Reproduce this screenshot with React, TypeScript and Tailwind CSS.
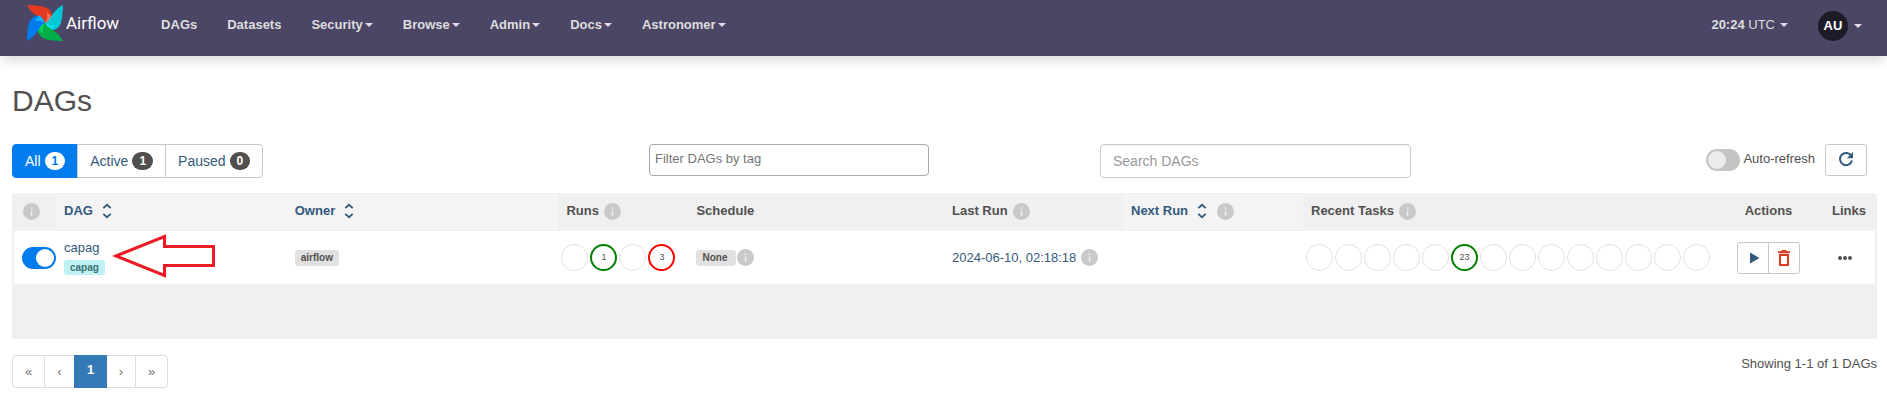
import { ReactNode } from "react";

const LINK = "text-[#33597c]";

function Caret() {
  return (
    <span
      aria-hidden="true"
      className="inline-block h-0 w-0 border-x-4 border-t-4 border-x-transparent border-t-[#e8dcea]"
    />
  );
}

function Info({ label }: { label: string }) {
  return (
    <svg role="img" aria-label={label} viewBox="0 0 20 20" className="size-[17px] shrink-0">
      <circle cx="10" cy="10" r="10" fill="#c9c9c9" />
      <rect x="9" y="5" width="2" height="2" fill="#ebebeb" />
      <rect x="9" y="9" width="2" height="6" fill="#ebebeb" />
    </svg>
  );
}

function SortIcon() {
  return (
    <svg aria-hidden="true" viewBox="0 0 10 16" className="h-4 w-[10px]" fill="none" stroke="currentColor" strokeWidth="1.8">
      <path d="M1.3 5.2 5 1.8l3.7 3.4M1.3 10.8 5 14.2l3.7-3.4" />
    </svg>
  );
}

function Logo() {
  const blades = [
    { angle: 0, main: "#e43921", fold: "#ff7557" },
    { angle: 90, main: "#00c7d4", fold: "#11e1ee" },
    { angle: 180, main: "#00ad46", fold: "#04d659" },
    { angle: 270, main: "#017cee", fold: "#0cb6ff" },
  ];
  return (
    <svg aria-hidden="true" viewBox="0 0 36 36" className="size-9">
      {blades.map((b) => (
        <g key={b.angle} transform={`rotate(${b.angle} 18 18)`}>
          <path d="M0 0C8 .4 17 .8 21 3.6 24 5.6 25.2 9 25.4 11.4L18 18C17 12.5 6 12 0 0Z" fill={b.main} />
          <path d="M18 18C20.500 14 20.800 10 19.600 7 22 9.500 24 11 25.600 11.400 25.200 14 22 16.500 18 18Z" fill={b.fold} />
        </g>
      ))}
    </svg>
  );
}

const menu = [
  { name: "DAGs", caret: false },
  { name: "Datasets", caret: false },
  { name: "Security", caret: true },
  { name: "Browse", caret: true },
  { name: "Admin", caret: true },
  { name: "Docs", caret: true },
  { name: "Astronomer", caret: true },
];

function Navbar() {
  return (
    <nav className="relative flex h-14 items-start justify-between bg-[#4b4566] pr-[25px] pl-[27px] text-[13px] leading-5 text-[#dedede] shadow-[0_6px_12px_-2px_rgba(0,0,0,0.16)]">
      <div className="flex items-start">
        <a href="#" className="mr-[27px] flex items-center gap-[3px] pt-[5px] font-['Roboto',sans-serif] text-[17px] text-white">
          <Logo />
          <span>Airflow</span>
        </a>
        {menu.map((m) =>
          m.caret ? (
            <button key={m.name} type="button" className="flex items-center gap-[2px] px-[15px] pt-[15px] font-bold">
              {m.name}
              <Caret />
            </button>
          ) : (
            <a key={m.name} href="#" className="px-[15px] pt-[15px] font-bold">
              {m.name}
            </a>
          )
        )}
      </div>
      <div className="flex items-start gap-[30px]">
        <button type="button" className="flex items-center pt-[15px]">
          <span className="mr-[5px]">
            <b>20:24</b> UTC
          </span>
          <Caret />
        </button>
        <button type="button" className="flex items-center gap-[6px] pt-[11px]">
          <span className="flex size-[30px] items-center justify-center rounded-full bg-[#1e1b29] text-[13px] font-bold text-white">
            AU
          </span>
          <Caret />
        </button>
      </div>
    </nav>
  );
}

function Toggle({ id, on, label }: { id: string; on?: boolean; label?: string }) {
  return (
    <input
      id={id}
      type="checkbox"
      role="switch"
      aria-label={label}
      defaultChecked={on}
      className="block h-[22px] w-[34px] shrink-0 appearance-none rounded-full bg-[#c4c3c2] p-[2px] before:block before:size-[18px] before:rounded-full before:bg-[#ebebeb] checked:bg-[#017cee] checked:before:ml-3 checked:before:bg-white"
    />
  );
}

function Filters() {
  const items = [
    { name: "All", count: 1, style: "rounded-l border-[#017cee] bg-[#017cee] text-white", badge: "bg-white text-[#017cee]" },
    { name: "Active", count: 1, style: "-ml-px border-[#c8c8c8] bg-white text-[#33597c]", badge: "bg-[#51504f] text-white" },
    { name: "Paused", count: 0, style: "-ml-px rounded-r border-[#c8c8c8] bg-white text-[#33597c]", badge: "bg-[#51504f] text-white" },
  ];
  return (
    <div className="flex">
      {items.map((i) => (
        <a key={i.name} href="#" className={`flex h-[34px] items-center gap-1 border px-3 text-[14px] ${i.style}`}>
          {i.name}
          <span className={`flex h-[18px] items-center rounded-full px-[7px] text-[12px] font-bold ${i.badge}`}>{i.count}</span>
        </a>
      ))}
    </div>
  );
}

function Toolbar() {
  return (
    <div className="grid grid-cols-[637fr_451fr_311fr_466fr] items-start">
      <Filters />
      <input
        aria-label="Filter DAGs by tag"
        placeholder="Filter DAGs by tag"
        className="h-8 w-[280px] rounded border border-[#aaa] px-[5px] pb-1 text-[13px] placeholder:text-[#757575]"
      />
      <input
        aria-label="Search DAGs"
        placeholder="Search DAGs"
        className="h-[34px] w-full rounded border border-[#ccc] px-3 text-[14px] shadow-[inset_0_1px_1px_rgba(0,0,0,0.075)] placeholder:text-[#999]"
      />
      <div className="flex items-start justify-end pr-[10px]">
        <div className="mt-[5px] mr-[10px] flex items-start gap-[3px]">
          <Toggle id="auto-refresh" />
          <label htmlFor="auto-refresh" className="leading-5">
            Auto-refresh
          </label>
        </div>
        <button
          type="button"
          aria-label="Refresh"
          className={`flex h-8 w-[42px] items-center justify-center rounded-[3px] border border-[#c8c8c8] ${LINK}`}
        >
          <svg viewBox="0 0 16 16" className="mb-[2px] size-4" fill="none" stroke="currentColor" strokeWidth="2">
            <path d="M13.3 4.8A6.1 6.1 0 1 0 14 9.6" />
            <path d="M15 1v6.200H8.800Z" fill="currentColor" stroke="none" />
          </svg>
        </button>
      </div>
    </div>
  );
}

type RingItem = { count?: number; color?: "green" | "red" };

function Rings({ items }: { items: RingItem[] }) {
  return (
    <div className="flex gap-[2px]">
      {items.map((r, i) => (
        <span
          key={i}
          className={`flex size-[27px] shrink-0 items-center justify-center rounded-full text-[9px] ${
            r.color === "green"
              ? "border-2 border-[#008000]"
              : r.color === "red"
                ? "border-2 border-[#ff0000]"
                : "border border-[#e1e1e1]"
          }`}
        >
          {r.count}
        </span>
      ))}
    </div>
  );
}

function Head({ children, className = "", sortable }: { children?: ReactNode; className?: string; sortable?: boolean }) {
  return (
    <th
      scope="col"
      className={`h-[38px] border-y border-[#f0f0f0] px-2 pb-[2px] text-left font-bold ${sortable ? `bg-[#f4f4f4] ${LINK}` : ""} ${className}`}
    >
      <div className="flex items-center gap-[5px]">{children}</div>
    </th>
  );
}

function SortLink({ children }: { children: ReactNode }) {
  return (
    <a href="#" className="flex items-center gap-[9px]">
      {children}
      <SortIcon />
    </a>
  );
}

const runs: RingItem[] = [{}, { count: 1, color: "green" }, {}, { count: 3, color: "red" }];
const tasks: RingItem[] = Array.from({ length: 14 }, (_, i) => (i === 5 ? { count: 23, color: "green" } : {}));

function DagTable() {
  return (
    <div className="mt-[15px] rounded-t border-x-2 border-[#f0f0f0] bg-[#f0f0f0] pb-[55px]">
      <table className="w-full table-fixed border-separate border-spacing-0">
        <thead>
          <tr>
            <Head className="w-[42px]">
              <span className="ml-px">
                <Info label="Pause or unpause DAGs" />
              </span>
            </Head>
            <Head sortable className="w-[12.4%]">
              <SortLink>DAG</SortLink>
            </Head>
            <Head sortable className="w-[14.6%]">
              <SortLink>Owner</SortLink>
            </Head>
            <Head className="w-[130px]">
              Runs <Info label="Status of all previous DAG runs" />
            </Head>
            <Head>Schedule</Head>
            <Head className="w-[179px]">
              Last Run <Info label="Date of the latest DAG run" />
            </Head>
            <Head sortable className="w-[180px]">
              <SortLink>Next Run</SortLink>
              <span className="ml-[5px]">
                <Info label="Expected date of the next DAG run" />
              </span>
            </Head>
            <Head className="w-[410px]">
              Recent Tasks <Info label="Status of tasks from active runs" />
            </Head>
            <Head className="w-[111px] [&>div]:justify-center">Actions</Head>
            <Head className="w-[51px]">Links</Head>
          </tr>
        </thead>
        <tbody>
          <tr className="h-[53px] bg-white [&>td]:px-2">
            <td>
              <Toggle id="toggle-capag" on label="Toggle capag" />
            </td>
            <td>
              <div className="relative flex flex-col items-start gap-[3px] pb-[2px]">
                <a href="#" className={`leading-[18px] ${LINK}`}>
                  capag
                </a>
                <a href="#" className="rounded-[3px] bg-[#bdf1f3] px-[6px] text-[10px] leading-[15px] font-bold text-[#3a7173]">
                  capag
                </a>
                <svg
                  aria-hidden="true"
                  viewBox="0 0 104 44"
                  className="pointer-events-none absolute -top-[5px] left-12 h-11 w-[104px]"
                  fill="none"
                  stroke="#ed1c24"
                  strokeWidth="3"
                >
                  <path d="M4 22 52.500 2.500V12.500H101.500V31.500H52.500V41.500Z" />
                </svg>
              </div>
            </td>
            <td>
              <a href="#" className="inline-block rounded-[3px] bg-[#e1e1e1] px-[6px] align-middle text-[10px] leading-4 font-bold">
                airflow
              </a>
            </td>
            <td className="pl-[3px]!">
              <Rings items={runs} />
            </td>
            <td>
              <div className="flex items-center gap-px">
                <a href="#" className="rounded-[3px] bg-[#e1e1e1] pr-[9px] pl-[6px] text-[10px] leading-4 font-bold">
                  None
                </a>
                <Info label="Schedule" />
              </div>
            </td>
            <td>
              <div className="flex items-center gap-[5px] whitespace-nowrap">
                <a href="#" className={LINK}>
                  2024-06-10, 02:18:18
                </a>
                <Info label="Run details" />
              </div>
            </td>
            <td />
            <td className="pl-[3px]!">
              <Rings items={tasks} />
            </td>
            <td>
              <div className="flex justify-center">
                <button
                  type="button"
                  aria-label="Trigger DAG"
                  className={`flex h-8 w-8 items-center justify-center rounded-l-[3px] border border-[#c8c8c8] ${LINK}`}
                >
                  <svg viewBox="0 0 12 12" className="ml-[3px] size-3" fill="currentColor">
                    <path d="M1 .5 10.500 6 1 11.500Z" />
                  </svg>
                </button>
                <button
                  type="button"
                  aria-label="Delete DAG"
                  className="-ml-px flex h-8 w-8 items-center justify-center rounded-r-[3px] border border-[#c8c8c8] text-[#e43921]"
                >
                  <svg viewBox="0 0 12 16" className="h-4 w-3" fill="none" stroke="currentColor" strokeWidth="2">
                    <path d="M0 2.200H12M3.500 1H8.500M2 5H10V15H2Z" />
                  </svg>
                </button>
              </div>
            </td>
            <td>
              <a href="#" aria-label="Links" className="ml-[6px] flex gap-px">
                <i className="size-1 rounded-full bg-[#51504f]" />
                <i className="size-1 rounded-full bg-[#51504f]" />
                <i className="size-1 rounded-full bg-[#51504f]" />
              </a>
            </td>
          </tr>
        </tbody>
      </table>
    </div>
  );
}

function Footer() {
  const cell = "-ml-px flex h-[33px] items-center justify-center border";
  return (
    <div className="mt-4 flex items-start justify-between">
      <div className="flex pl-px text-[13px] text-[#777]">
        <a href="#" className={`${cell} w-[33px] rounded-l border-[#ddd]`}>«</a>
        <a href="#" className={`${cell} w-[31px] border-[#ddd]`}>‹</a>
        <a href="#" className={`${cell} z-10 w-[33px] border-[#337ab7] bg-[#337ab7] pb-1 text-[13px] font-bold text-white`}>1</a>
        <a href="#" className={`${cell} w-[30px] border-[#ddd]`}>›</a>
        <a href="#" className={`${cell} w-[33px] rounded-r border-[#ddd]`}>»</a>
      </div>
      <p className="-mt-px leading-5">Showing 1-1 of 1 DAGs</p>
    </div>
  );
}

export default function App() {
  return (
    <div className="bg-white font-['Liberation_Sans',Arial,sans-serif] text-[13px] text-[#51504f]">
      <Navbar />
      <main className="pt-7 pr-[10px] pl-3">
        <h1 className="mb-[27px] text-[30px] leading-[33px]">DAGs</h1>
        <Toolbar />
        <DagTable />
        <Footer />
      </main>
    </div>
  );
}
